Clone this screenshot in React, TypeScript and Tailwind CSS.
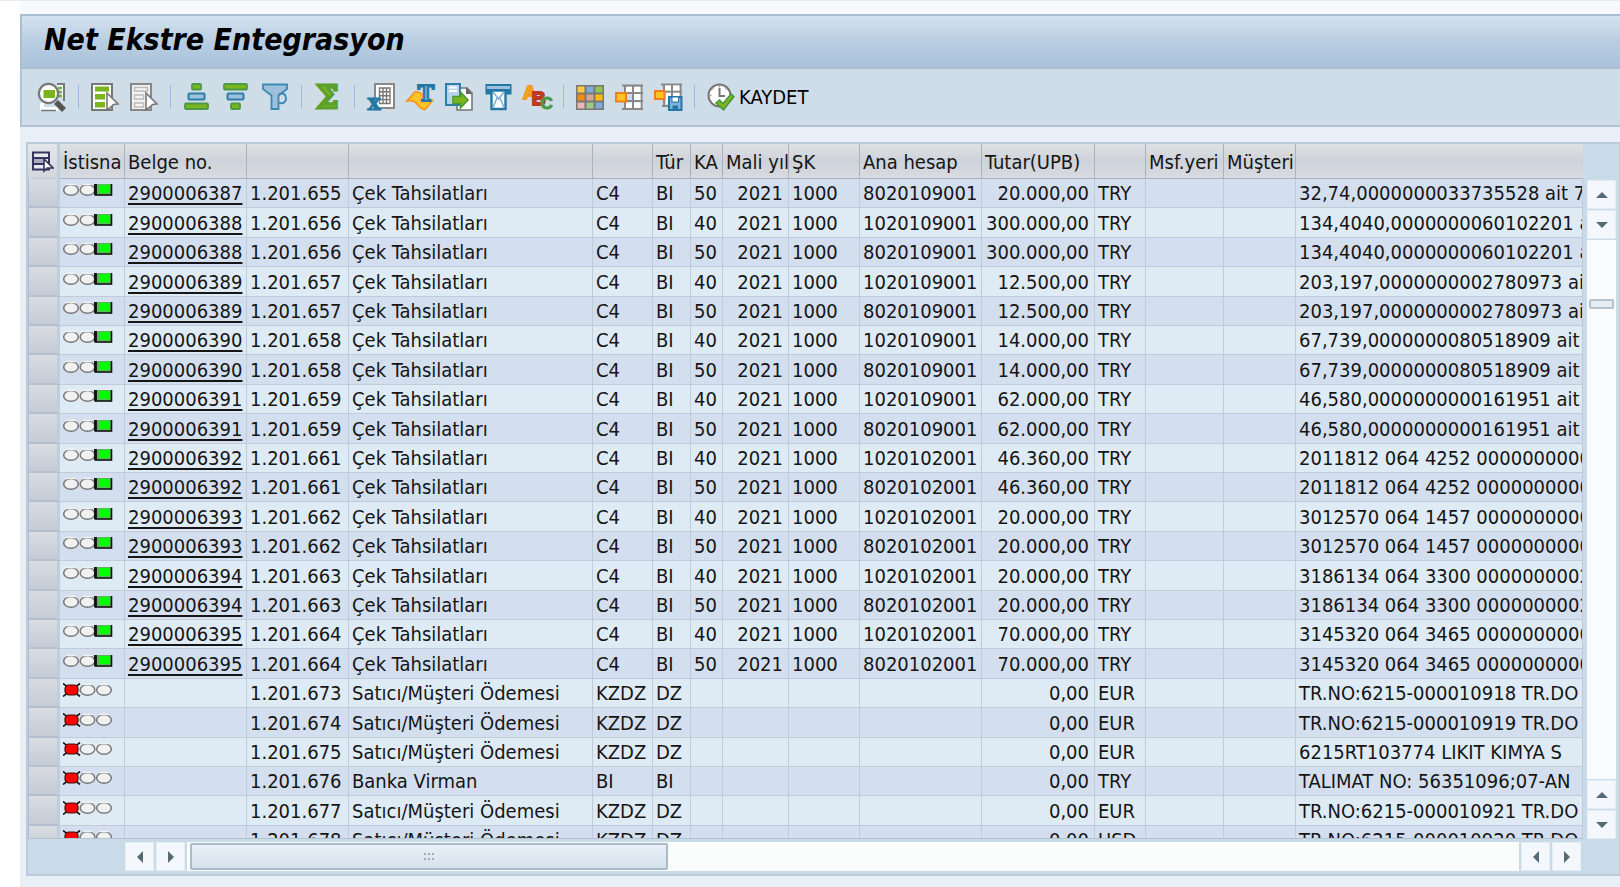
import React from "react";

type Row = {
  ok: boolean;
  doc: string;
  ref: string;
  kind: string;
  code: string;
  type: string;
  key: string;
  year: string;
  company: string;
  account: string;
  amount: string;
  currency: string;
  text: string;
};

const cheques: [string, string, string, string, string, boolean?][] = [
  ["2900006387", "655", "20109001", "20.000,00", "32,74,0000000033735528 ait 7", true],
  ["2900006388", "656", "20109001", "300.000,00", "134,4040,0000000060102201 ait"],
  ["2900006389", "657", "20109001", "12.500,00", "203,197,0000000002780973 ait"],
  ["2900006390", "658", "20109001", "14.000,00", "67,739,0000000080518909 ait"],
  ["2900006391", "659", "20109001", "62.000,00", "46,580,0000000000161951 ait"],
  ["2900006392", "661", "20102001", "46.360,00", "2011812 064 4252 0000000000"],
  ["2900006393", "662", "20102001", "20.000,00", "3012570 064 1457 0000000000"],
  ["2900006394", "663", "20102001", "20.000,00", "3186134 064 3300 0000000002"],
  ["2900006395", "664", "20102001", "70.000,00", "3145320 064 3465 0000000000"],
];

const posted: Row[] = cheques.flatMap(([doc, n, acc, amount, text, creditOnly]) =>
  (creditOnly ? ["50"] : ["40", "50"]).map((key) => ({
    ok: true,
    doc,
    ref: "1.201." + n,
    kind: "Çek Tahsilatları",
    code: "C4",
    type: "BI",
    key,
    year: "2021",
    company: "1000",
    account: (key === "40" ? "10" : "80") + acc,
    amount,
    currency: "TRY",
    text,
  })),
);

const failed: Row[] = [
  ["673", "Satıcı/Müşteri Ödemesi", "KZDZ", "DZ", "EUR", "TR.NO:6215-000010918 TR.DO"],
  ["674", "Satıcı/Müşteri Ödemesi", "KZDZ", "DZ", "EUR", "TR.NO:6215-000010919 TR.DO"],
  ["675", "Satıcı/Müşteri Ödemesi", "KZDZ", "DZ", "EUR", "6215RT103774 LIKIT KIMYA S"],
  ["676", "Banka Virman", "BI", "BI", "TRY", "TALIMAT NO: 56351096;07-AN"],
  ["677", "Satıcı/Müşteri Ödemesi", "KZDZ", "DZ", "EUR", "TR.NO:6215-000010921 TR.DO"],
  ["678", "Satıcı/Müşteri Ödemesi", "KZDZ", "DZ", "USD", "TR.NO:6215-000010920 TR.DO"],
].map(([n, kind, code, type, currency, text]) => ({
  ok: false,
  doc: "",
  ref: "1.201." + n,
  kind,
  code,
  type,
  key: "",
  year: "",
  company: "",
  account: "",
  amount: "0,00",
  currency,
  text,
}));

const rows = [...posted, ...failed];

const columns: { label: string; width: string }[] = [
  { label: "İstisna", width: "w-[65px]" },
  { label: "Belge no.", width: "w-[122px]" },
  { label: "", width: "w-[102px]" },
  { label: "", width: "w-[244px]" },
  { label: "", width: "w-[60px]" },
  { label: "Tür", width: "w-[38px]" },
  { label: "KA", width: "w-[32px]" },
  { label: "Mali yıl", width: "w-[66px]" },
  { label: "ŞK", width: "w-[71px]" },
  { label: "Ana hesap", width: "w-[122px]" },
  { label: "Tutar(UPB)", width: "w-[113px]" },
  { label: "", width: "w-[51px]" },
  { label: "Msf.yeri", width: "w-[78px]" },
  { label: "Müşteri", width: "w-[72px]" },
  { label: "", width: "" },
];

function Svg({ children }: { children: React.ReactNode }) {
  return (
    <svg viewBox="0 0 28 28" className="block size-7 overflow-visible" aria-hidden="true">
      {children}
    </svg>
  );
}

const Pointer = () => (
  <path d="M16 10 L27 21 L22.5 21.5 L20 24 L16 27 Z" fill="#fff" stroke="#777" strokeWidth="1.6" />
);

const DetailIcon = () => (
  <Svg>
    <path d="M19 1 H26 V18" fill="#fff" stroke="#777" strokeWidth="2" />
    <path d="M20 5h4M20 9h4M20 13h4" stroke="#6cb52d" strokeWidth="2.4" />
    <path d="M4 20 V26 H20" fill="none" stroke="#fff" strokeWidth="4" />
    <path d="M3 27.500 H18" stroke="#777" strokeWidth="1.5" />
    <path d="M18 19 L26 27" stroke="#555" strokeWidth="5.500" />
    <circle cx="10.500" cy="10.500" r="9.600" fill="#fff" stroke="#777" strokeWidth="2.200" />
    <rect x="5.500" y="7" width="11.500" height="8" fill="#7ab51d" />
  </Svg>
);

const SelectAllIcon = () => (
  <Svg>
    <path d="M1 1 H21 V27 H1 Z" fill="#fff" stroke="#777" strokeWidth="2" />
    <rect x="4" y="3.500" width="14" height="5" fill="#7ab51d" />
    <rect x="4" y="11" width="10" height="5.500" fill="#7ab51d" />
    <rect x="4" y="19" width="10" height="5.500" fill="#7ab51d" />
    <Pointer />
  </Svg>
);

const DeselectIcon = () => (
  <Svg>
    <path d="M1 1 H21 V27 H1 Z" fill="#f2f2f2" stroke="#888" strokeWidth="2" />
    <path d="M4.500 4.500h13v3.500h-13zM4.500 12h9v4h-9zM4.500 20h9v4h-9z" fill="#f5f5f5" stroke="#bbb" strokeWidth="1.4" />
    <Pointer />
  </Svg>
);

const green = { fill: "#7ab51d", stroke: "#4b9a45", strokeWidth: 1.8 };
const blue = { fill: "#9fc0dd", stroke: "#2d7fa8", strokeWidth: 2 };

const AscIcon = () => (
  <Svg>
    <rect x="9" y="1" width="9" height="5.500" rx="1" {...green} />
    <rect x="5.500" y="10.500" width="16" height="6" rx="1" {...blue} />
    <rect x="2" y="20.500" width="23" height="5.500" rx="1" {...green} />
  </Svg>
);

const DescIcon = () => (
  <Svg>
    <rect x="2" y="1" width="23" height="5.500" rx="1" {...green} />
    <rect x="5.500" y="10.500" width="16" height="6" rx="1" {...blue} />
    <rect x="9" y="20.500" width="9" height="5.500" rx="1" {...green} />
  </Svg>
);

const FilterIcon = () => (
  <Svg>
    <path d="M2 1.500 H26 V6 L17.500 12.500 V26 H10.500 V12.500 L2 6 Z" fill="#9fc0dd" stroke="#3a89b5" strokeWidth="1.8" />
    <path d="M18 11 Q25 9 25 15.500 Q25 21 18 20" fill="none" stroke="#3a89b5" strokeWidth="2" />
  </Svg>
);

const SumIcon = () => (
  <Svg>
    <text x="13.500" y="25" textAnchor="middle" fontFamily="DejaVu Serif" fontWeight="700" fontSize="31" fill="#7ab51d" stroke="#5aa02c" strokeWidth="3">
      Σ
    </text>
  </Svg>
);

const SpreadsheetIcon = () => (
  <Svg>
    <path d="M8 1 H27 V25 H8 Z" fill="#fff" stroke="#888" strokeWidth="2" />
    <path d="M12.500 5 H23 V20.500 H12.500 Z M12.500 8.800H23 M12.500 12.700H23 M12.500 16.600H23 M16 5V20.500 M19.500 5V20.500" fill="none" stroke="#777" strokeWidth="1.4" />
    <text x="7" y="27" textAnchor="middle" fontFamily="DejaVu Serif" fontWeight="700" fontSize="22" fill="#2377a5" stroke="#2377a5" strokeWidth="1">
      x
    </text>
  </Svg>
);

const WordIcon = () => (
  <Svg>
    <path d="M1 18 L9 9 Q15 8 18 15 Q22 19 27 17 L19 26.500 Q14 26 10 19.500 Q6 17 1 18 Z" fill="#ffc423" stroke="#f39a1c" strokeWidth="1.8" />
    <text x="20" y="18" textAnchor="middle" fontFamily="DejaVu Serif" fontWeight="700" fontSize="22" fill="#7aa8cf" stroke="#2377a5" strokeWidth="2">
      T
    </text>
  </Svg>
);

const ExportIcon = () => (
  <Svg>
    <path d="M12 5 H22 L27 10 V27 H12 Z" fill="#fff" stroke="#777" strokeWidth="1.6" />
    <path d="M21 4 V11 H27 Z" fill="#666" />
    <path d="M1 1 H15 V22 H1 Z" fill="#b9d3ea" stroke="#2d7fa8" strokeWidth="2" />
    <path d="M4 4.500h8M4 8h8" stroke="#fff" strokeWidth="2" />
    <path d="M8 13.500 H15.500 V9 L23 17 L15.500 25 V20.500 H8 Z" fill="#7ab51d" stroke="#4b9a35" strokeWidth="1.6" />
  </Svg>
);

const MailIcon = () => (
  <Svg>
    <rect x="1.500" y="1" width="26" height="10.500" fill="#2377a5" />
    <rect x="3" y="3" width="23" height="3" fill="#9fc0dd" />
    <path d="M7.500 7.500 H21.500 V26 H7.500 Z" fill="#fff" stroke="#2377a5" strokeWidth="2.400" />
    <path d="M9 9 L14.500 16 L20 9 M9 24.500 L13 15 M20 24.500 L16 15" fill="none" stroke="#7fadd0" strokeWidth="1.500" />
  </Svg>
);

const AbcIcon = () => (
  <Svg>
    <text x="0" y="16" fontFamily="Liberation Sans" fontWeight="700" fontSize="19">
      <tspan fill="#ffc423" stroke="#f39a1c" strokeWidth="2">A</tspan>
      <tspan dx="-5" dy="6" fill="#d8452b" stroke="#b93a20" strokeWidth="2">B</tspan>
      <tspan dx="-5" dy="4" fontSize="17" fill="#4b9a45" stroke="#4b9a45" strokeWidth="1">C</tspan>
    </text>
  </Svg>
);

const swatches = ["#ffc83d", "#7fa9d6", "#92c353", "#f58a0b", "#d8a595", "#ffbc00", "#eab5b5", "#9ccb85", "#7fa9d6"];

const LayoutIcon = () => (
  <Svg>
    <rect x="0" y="2" width="28" height="25" fill="#777" />
    {swatches.map((c, i) => (
      <rect key={i} x={1.5 + (i % 3) * 9} y={3.5 + Math.floor(i / 3) * 8} width="7" height="6" fill={c} />
    ))}
  </Svg>
);

const ChooseLayoutIcon = () => (
  <Svg>
    <path d="M7 2.500 H28 M7 26 H28 M10 10H28 M10 18H28 M10 2V27 M18 2V27 M26.500 2V27" stroke="#888" strokeWidth="2" />
    <path d="M11 4h6v5h-6zM19 4h6.500v5H19zM19 11h6.500v6H19zM11 19.500h6v5.500h-6zM19 19.500h6.500v5.500H19z" fill="#fff" />
    <path d="M12 11h5v6h-5z" fill="#c9dcee" />
    <rect x="1" y="10" width="10" height="8.500" fill="#ffc423" stroke="#f07f1f" strokeWidth="2" />
  </Svg>
);

const SaveLayoutIcon = () => (
  <Svg>
    <path d="M7 1.500 H28 M10 8.500H28 M8 23H14 M10 1V23 M18 1V14 M26.500 1V14" stroke="#888" strokeWidth="2" />
    <path d="M11 2.500h6v5h-6zM19 2.500h6.500v5H19zM12 10h5v11h-5zM19 10h6.500v3H19z" fill="#fff" />
    <rect x="1" y="8" width="9.500" height="8" fill="#ffc423" stroke="#f07f1f" strokeWidth="2" />
    <rect x="15" y="14" width="12.500" height="13" fill="#7fb0d6" stroke="#2377a5" strokeWidth="2" />
    <rect x="18" y="14" width="6.500" height="5" fill="#fff" stroke="#2377a5" strokeWidth="1" />
    <rect x="18.500" y="22.500" width="5.500" height="4.500" fill="#2377a5" />
  </Svg>
);

const ClockCheckIcon = () => (
  <Svg>
    <circle cx="12.500" cy="12.500" r="11" fill="#fff" stroke="#777" strokeWidth="2" />
    <path d="M12.500 5 V13 H18" fill="none" stroke="#777" strokeWidth="2" />
    <path d="M12.500 2.500v2M2.500 12.500h2M5.500 5.500l1 1M19.500 5.500l-1 1M12.500 20.500v2" stroke="#999" strokeWidth="1.400" />
    <path d="M9 20 L12.500 17 L16 20.500 L24 11 L27 13.500 L16.500 27 Z" fill="#7ab51d" stroke="#3f9440" strokeWidth="1.400" />
  </Svg>
);

const toolGroups: { name: string; Icon: () => React.ReactElement }[][] = [
  [{ name: "Ayrıntılar", Icon: DetailIcon }],
  [
    { name: "Tümünü seç", Icon: SelectAllIcon },
    { name: "Seçimi kaldır", Icon: DeselectIcon },
  ],
  [
    { name: "Artan sıralama", Icon: AscIcon },
    { name: "Azalan sıralama", Icon: DescIcon },
    { name: "Filtre", Icon: FilterIcon },
  ],
  [{ name: "Toplam", Icon: SumIcon }],
  [
    { name: "Hesap tablosu", Icon: SpreadsheetIcon },
    { name: "Kelime işlem", Icon: WordIcon },
    { name: "Yerel dosya", Icon: ExportIcon },
    { name: "Posta alıcısı", Icon: MailIcon },
    { name: "ABC analizi", Icon: AbcIcon },
  ],
  [
    { name: "Düzeni değiştir", Icon: LayoutIcon },
    { name: "Düzen seç", Icon: ChooseLayoutIcon },
    { name: "Düzeni kaydet", Icon: SaveLayoutIcon },
  ],
];

const Separator = () => (
  <span className="flex w-[3px] justify-center">
    <span className="h-6 w-px bg-[#9dbbdc]" />
  </span>
);

function Light({ ok }: { ok: boolean }) {
  return (
    <svg viewBox="0 0 50 14" className="mb-1.5 block h-3.5 w-[50px]" role="img" aria-label={ok ? "Yeşil" : "Kırmızı"}>
      <g fill="#f1f1f1" stroke="#777" strokeWidth="1.500">
        {ok && <ellipse cx="8" cy="7" rx="7.300" ry="5.300" />}
        <ellipse cx="24.500" cy="7" rx="7.300" ry="5.300" />
        {!ok && <ellipse cx="41" cy="7" rx="7.300" ry="5.300" />}
      </g>
      <path d={ok ? "M3 1.500h10M20 1.500h9" : "M20 1.500h9M36 1.500h10"} stroke="#f1f1f1" strokeWidth="1.500" />
      {ok ? (
        <>
          <path d="M31 1 H49 V12.500 H31 Z" fill="#5fb35f" />
          <path d="M32.500 1 V12 H48.500 V1" fill="none" stroke="#111" strokeWidth="1.600" />
          <path d="M32.500 1 V12" stroke="#111" strokeWidth="2.800" />
          <rect x="36" y="2" width="10" height="8" fill="#00ff00" />
        </>
      ) : (
        <>
          <path d="M0 .5 L17 13.500 M17 .5 L0 13.500" stroke="#111" strokeWidth="1.600" />
          <rect x="2" y="2" width="13" height="10" rx="4" fill="#ff0000" stroke="#401010" strokeWidth="1.200" />
        </>
      )}
    </svg>
  );
}

const arrowPaths = {
  up: "M1 10 L7 4 L13 10 Z",
  down: "M1 4 L7 10 L13 4 Z",
  left: "M10 1 L4 7 L10 13 Z",
  right: "M4 1 L10 7 L4 13 Z",
};

function Arrow({ dir, label }: { dir: keyof typeof arrowPaths; label: string }) {
  return (
    <button aria-label={label} className="flex size-[29px] shrink-0 items-center justify-center border border-[#e4ecf6] bg-[#f4f7fc]">
      <svg viewBox="0 0 14 14" className="size-3.5" aria-hidden="true">
        <path d={arrowPaths[dir]} fill="#566a76" />
      </svg>
    </button>
  );
}

const cell = "overflow-hidden whitespace-nowrap border-r border-b border-[#bfcbd9] p-0 pl-[3px] text-left font-normal";
const numberCell = "overflow-hidden whitespace-nowrap border-r border-b border-[#bfcbd9] p-0 pl-[3px] pr-[5px] text-right font-normal";

function Td({ children, right }: { children?: React.ReactNode; right?: boolean }) {
  return <td className={right ? numberCell : cell}>{children}</td>;
}

export default function App() {
  return (
    <div className="flex h-screen flex-col overflow-hidden border-t border-[#e9ebf0] bg-white pl-5 font-['DejaVu_Sans_Condensed','Noto_Sans',sans-serif] text-[20px] text-[#151515]">
      <div className="h-[13px] shrink-0 bg-[#f7f9fc]" />
      <div className="flex min-h-0 flex-1 flex-col bg-[#e8eff7]">
        <header className="flex h-[55px] shrink-0 items-center border-2 border-r-0 border-[#a9bdd3] bg-linear-to-b from-[#d3e2ef] via-[#b9cee2] to-[#a9c1da] pb-1 pl-[22px]">
          <h1 className="text-[30px] leading-9 font-bold italic text-black">Net Ekstre Entegrasyon</h1>
        </header>
        <div role="toolbar" aria-label="Liste araçları" className="flex h-[58px] shrink-0 items-center gap-[11px] border-b-2 border-l-2 border-[#b3c3d5] bg-[#cfdde8] pl-4">
          {toolGroups.map((group, g) => (
            <React.Fragment key={g}>
              {group.map(({ name, Icon }) => (
                <button key={name} aria-label={name} className="size-7 shrink-0">
                  <Icon />
                </button>
              ))}
              <Separator />
            </React.Fragment>
          ))}
          <button className="flex items-center gap-1 text-black">
            <ClockCheckIcon />
            KAYDET
          </button>
        </div>

        <main className="mt-[15px] mb-[11px] ml-[6px] flex min-h-0 flex-1 flex-col border-2 border-r border-[#bccbdc] bg-[#c9dae9]">
          <div className="flex min-h-0 flex-1">
            <div className="min-w-0 flex-1 overflow-hidden border-b border-[#b5c2d0]">
              <table className="w-full table-fixed border-separate border-spacing-0">
                <colgroup>
                  <col className="w-8" />
                  {columns.map((c, i) => (
                    <col key={i} className={c.width} />
                  ))}
                </colgroup>
                <thead>
                  <tr className="h-[35px]">
                    <th className="border-r-[3px] border-b border-[#bfcede] bg-linear-to-b from-[#e3e6ea] to-[#d3d7dc] p-0 pt-0.5 pl-1">
                      <button aria-label="Tüm satırları seç" className="block">
                        <svg viewBox="0 0 22 22" className="size-[22px]" aria-hidden="true">
                          <path d="M1 1.500 H17 V18.500 H1 Z" fill="#e8eaf0" stroke="#35355c" strokeWidth="2" />
                          <path d="M1 7 H17 M1 13 H12" stroke="#35355c" strokeWidth="2" />
                          <path d="M2 8h10v4H2z" fill="#a9abc0" />
                          <path d="M12 8 V20 L15 17 H21 Z" fill="#fff" stroke="#35355c" strokeWidth="1.600" />
                        </svg>
                      </button>
                    </th>
                    {columns.map((c, i) => (
                      <th
                        key={i}
                        scope="col"
                        className="overflow-hidden border-r border-b border-[#a9b3c0] bg-linear-to-b from-[#dfe1e3] via-[#ced2da] to-[#d8dce0] p-0 pt-0.5 pl-[3px] text-left leading-7 font-normal whitespace-nowrap last:border-r-0"
                      >
                        {c.label}
                      </th>
                    ))}
                  </tr>
                </thead>
                <tbody className="leading-7">
                  {rows.map((r, i) => (
                    <tr key={i} className="h-[29px] odd:bg-[#d3dfef] even:bg-[#deebf5] nth-[5n+2]:h-[30px] nth-[5n+4]:h-[30px]">
                      <td className="border-r-[3px] border-b-2 border-l border-r-[#bfcede] border-b-[#b3bfce] border-l-[#b3bfce] bg-linear-to-b from-[#d9dce2] to-[#c5cbd5] p-0" />
                      <td className="border-r border-b border-[#bfcbd9] p-0 pl-[3px]">
                        <Light ok={r.ok} />
                      </td>
                      <Td>
                        {r.doc && (
                          <a href="#" className="block w-fit underline underline-offset-3">
                            {r.doc}
                          </a>
                        )}
                      </Td>
                      <Td>{r.ref}</Td>
                      <Td>{r.kind}</Td>
                      <Td>{r.code}</Td>
                      <Td>{r.type}</Td>
                      <Td>{r.key}</Td>
                      <Td right>{r.year}</Td>
                      <Td>{r.company}</Td>
                      <Td>{r.account}</Td>
                      <Td right>{r.amount}</Td>
                      <Td>{r.currency}</Td>
                      <Td />
                      <Td />
                      <Td>{r.text}</Td>
                    </tr>
                  ))}
                </tbody>
              </table>
            </div>
            <div className="flex w-9 shrink-0 flex-col items-start gap-px pt-9 pl-1">
              <Arrow dir="up" label="Yukarı kaydır" />
              <Arrow dir="down" label="Aşağı kaydır" />
              <div className="flex w-[29px] flex-1 flex-col items-center bg-[#fafbfc] pt-[59px]">
                <div className="h-[10px] w-[25px] rounded-xs border-2 border-[#b3c2cf] bg-[#e4ecf4]" />
              </div>
              <Arrow dir="up" label="Bir satır yukarı" />
              <Arrow dir="down" label="Bir satır aşağı" />
            </div>
          </div>
          <div className="flex h-[35px] shrink-0 items-center gap-[2px] pr-[38px] pl-[97px]">
            <Arrow dir="left" label="Sola kaydır" />
            <Arrow dir="right" label="Sağa kaydır" />
            <div className="flex h-[29px] flex-1 items-center bg-[#fbfcfc] pl-[3px]">
              <div className="flex h-[27px] w-[36%] items-center justify-center rounded-xs border-2 border-[#a9bac8] bg-linear-to-b from-[#e9f0f7] to-[#d5e1ec]">
                <svg viewBox="0 0 12 10" className="h-[10px] w-3" aria-hidden="true">
                  <path d="M1 2h2M5 2h2M9 2h2M1 7h2M5 7h2M9 7h2" stroke="#9fadb9" strokeWidth="2" />
                </svg>
              </div>
            </div>
            <Arrow dir="left" label="Bir sütun sola" />
            <Arrow dir="right" label="Bir sütun sağa" />
          </div>
        </main>
      </div>
    </div>
  );
}
